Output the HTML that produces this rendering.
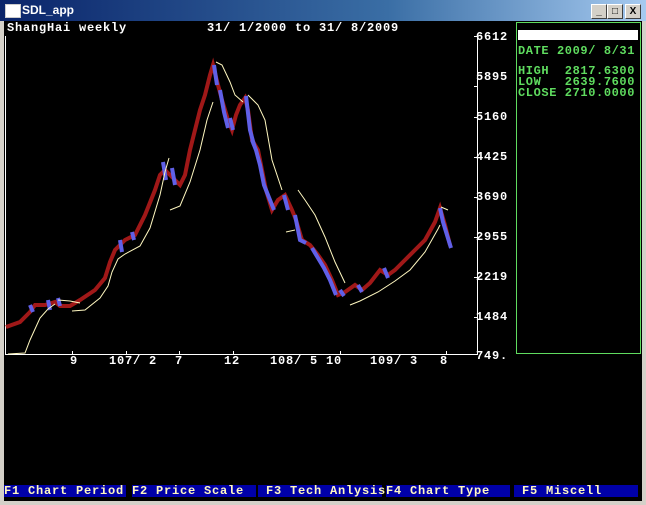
<!DOCTYPE html>
<html><head><meta charset="utf-8"><style>
body{margin:0;width:646px;height:505px;overflow:hidden;background:#d4d0c8;font-family:"Liberation Mono",monospace;}
.win{position:absolute;left:0;top:0;width:646px;height:505px;background:#d4d0c8;}
.title{position:absolute;left:0;top:0;width:646px;height:21px;background:linear-gradient(90deg,#0a246a,#3a6ea5 60%,#a6caf0);}
.title span{position:absolute;left:22px;top:3px;color:#fff;font:bold 12px "Liberation Sans",sans-serif;}
.ico{position:absolute;left:5px;top:4px;width:14px;height:12px;background:#fff;border:1px solid #ccc;}
.btn{position:absolute;top:4px;width:14px;height:13px;background:#d4d0c8;border:1px solid;border-color:#fff #404040 #404040 #fff;font:bold 10px "Liberation Sans",sans-serif;text-align:center;line-height:13px;color:#000;}
.screen{position:absolute;left:4px;top:21px;width:638px;height:480px;background:#000;}
.t{position:absolute;color:#fff;font-weight:bold;font-size:12px;letter-spacing:0.8px;white-space:pre;line-height:11px;}
.g{color:#5fdc5f;letter-spacing:0.6px;}
.bar{position:absolute;top:464px;height:12px;background:#0000a8;color:#fff8c0;font-weight:bold;font-size:12px;letter-spacing:0.8px;line-height:12px;white-space:pre;}
</style></head><body><div class="win">
<div class="title"><div class="ico"></div><span>SDL_app</span>
<div class="btn" style="left:591px">_</div><div class="btn" style="left:607px">□</div><div class="btn" style="left:625px">X</div></div>
<div class="screen">
<svg width="638" height="480" style="position:absolute;left:0;top:0">
<g stroke="#fff" stroke-width="1" fill="none">
<line x1="1.5" y1="15" x2="1.5" y2="333"/><line x1="1" y1="333.5" x2="474" y2="333.5"/><line x1="473.5" y1="15" x2="473.5" y2="333"/>
<line x1="470" y1="15.5" x2="474" y2="15.5"/><line x1="470" y1="65.5" x2="474" y2="65.5"/><line x1="470" y1="96.5" x2="474" y2="96.5"/><line x1="470" y1="136.5" x2="474" y2="136.5"/><line x1="470" y1="176.5" x2="474" y2="176.5"/><line x1="470" y1="216.5" x2="474" y2="216.5"/><line x1="470" y1="256.5" x2="474" y2="256.5"/><line x1="470" y1="296.5" x2="474" y2="296.5"/>
<line x1="68.5" y1="330" x2="68.5" y2="334"/><line x1="122.5" y1="330" x2="122.5" y2="334"/><line x1="175.5" y1="330" x2="175.5" y2="334"/><line x1="229.5" y1="330" x2="229.5" y2="334"/><line x1="336.5" y1="330" x2="336.5" y2="334"/><line x1="442.5" y1="330" x2="442.5" y2="334"/>
</g>
<g transform="translate(-4,-21)" fill="none">
<polyline stroke="#a01818" stroke-width="4" points="6,327 20,322 30,312 35,305 45,305 55,302 60,306 70,306 80,300 95,290 105,278 110,262 115,250 125,240 135,235 145,215 155,190 160,175 165,170 170,175 175,180 180,185 185,175 190,150 195,130 200,110 205,95 210,75 213,65 218,85 222,100 228,120 232,130 236,115 240,105 245,98 248,110 252,140 258,150 262,170 266,190 272,210 278,200 285,195 292,210 296,220 302,240 310,245 318,255 325,265 332,280 338,295 345,292 355,285 362,290 370,283 380,270 388,275 395,270 405,260 415,250 425,240 435,222 440,208 445,225 450,245"/>
<g stroke="#6060e8" stroke-width="4">
<polyline points="30,305 33,312"/><polyline points="48,300 50,310"/><polyline points="58,298 60,306"/>
<polyline points="120,240 122,252"/><polyline points="132,232 134,240"/><polyline points="163,162 166,180"/><polyline points="172,168 175,185"/>
<polyline points="214,65 217,85"/><polyline points="220,90 224,112 228,128"/><polyline points="230,118 233,130"/><polyline points="246,96 250,130 254,145"/>
<polyline points="252,140 256,150 260,165 264,185 270,200 274,210"/><polyline points="284,195 288,210"/><polyline points="295,215 300,240 306,243"/>
<polyline points="312,248 318,258 324,268 330,280 336,295"/><polyline points="340,290 344,296"/><polyline points="358,285 362,292"/><polyline points="384,268 388,278"/>
<polyline points="440,208 443,222 447,235 451,248"/>
</g>
<g stroke="#fff8c0" stroke-width="1">
<polyline points="8,354 25,353 30,340 40,318 48,309 55,304"/>
<polyline points="58,300 70,301 80,303"/>
<polyline points="72,311 85,310 100,298 108,286 112,272 118,259 125,254 140,246 150,228 160,195 165,172 169,158"/>
<polyline points="170,210 180,206 190,182 200,150 207,120 213,102"/>
<polyline points="216,62 222,65 230,82 235,95 243,102"/>
<polyline points="248,95 258,105 265,120 272,160 282,190"/>
<polyline points="298,190 305,200 315,215 325,237 335,262 345,283"/>
<polyline points="286,232 295,230"/>
<polyline points="350,305 360,301 378,292 395,281 410,270 425,252 438,229 440,225"/>
<polyline points="441,207 448,210"/>
</g></g>
<rect x="512.5" y="1.5" width="124" height="331" fill="none" stroke="#5fdc5f"/>
<rect x="514" y="9" width="120" height="10" fill="#fff"/>
</svg>
<div class="t" style="left:3px;top:2px">ShangHai weekly          31/ 1/2000 to 31/ 8/2009</div>
<div class="t" style="left:472px;top:11px">6612</div>
<div class="t" style="left:472px;top:51px">5895</div>
<div class="t" style="left:472px;top:91px">5160</div>
<div class="t" style="left:472px;top:131px">4425</div>
<div class="t" style="left:472px;top:171px">3690</div>
<div class="t" style="left:472px;top:211px">2955</div>
<div class="t" style="left:472px;top:251px">2219</div>
<div class="t" style="left:472px;top:291px">1484</div>
<div class="t" style="left:472px;top:330px">749.</div>
<div class="t" style="left:66px;top:335px">9</div>
<div class="t" style="left:105px;top:335px">107/ 2</div>
<div class="t" style="left:171px;top:335px">7</div>
<div class="t" style="left:220px;top:335px">12</div>
<div class="t" style="left:266px;top:335px">108/ 5 10</div>
<div class="t" style="left:366px;top:335px">109/ 3</div>
<div class="t" style="left:436px;top:335px">8</div>
<div class="t g" style="left:514px;top:25px">DATE 2009/ 8/31</div>
<div class="t g" style="left:514px;top:45px">HIGH  2817.6300
LOW   2639.7600
CLOSE 2710.0000</div>
<div class="bar" style="left:0;width:122px">F1 Chart Period</div>
<div class="bar" style="left:128px;width:124px">F2 Price Scale</div>
<div class="bar" style="left:254px;width:124px"> F3 Tech Anlysis</div>
<div class="bar" style="left:382px;width:124px">F4 Chart Type</div>
<div class="bar" style="left:510px;width:124px"> F5 Miscell</div>
</div></div></body></html>
